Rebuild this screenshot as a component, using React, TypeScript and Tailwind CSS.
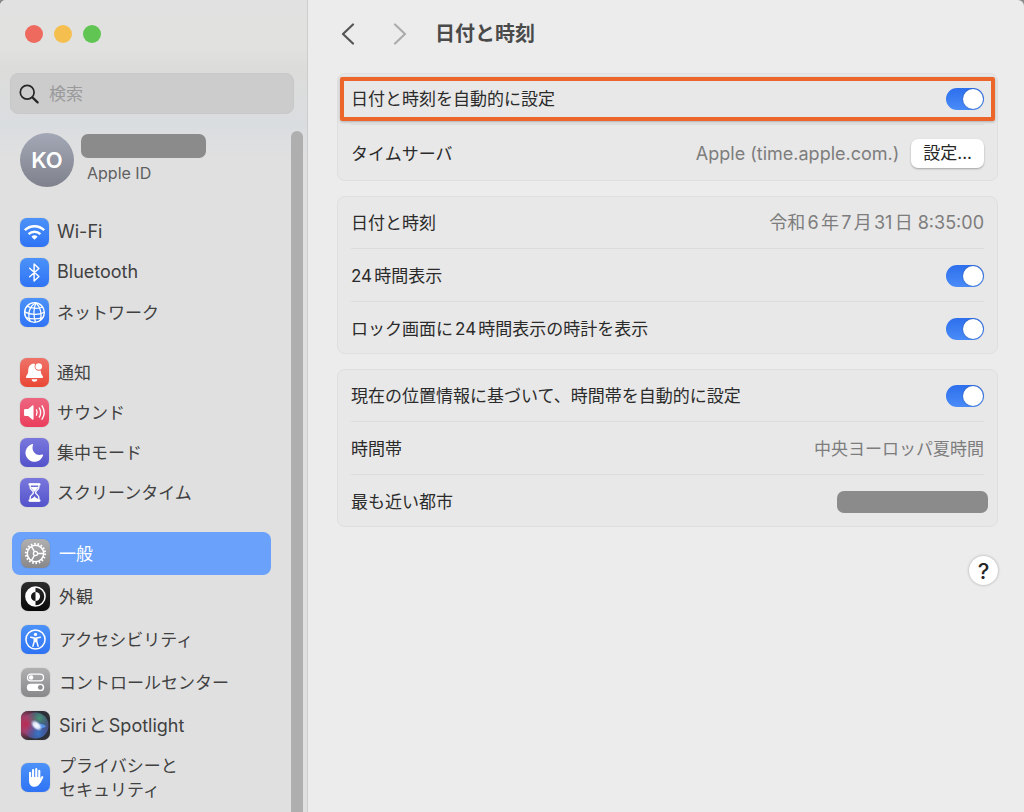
import type { ReactNode } from "react";

const Svg = ({ children, box = "0 0 30 30" }: { children: ReactNode; box?: string }) => (
  <svg viewBox={box} className="size-full" fill="none" aria-hidden="true">
    {children}
  </svg>
);

const WifiIcon = () => (
  <Svg>
    <g stroke="#fff" strokeWidth="2.5">
      <path d="M5 12.6a14.3 14.3 0 0 1 20 0" />
      <path d="M8.9 16.6a8.8 8.8 0 0 1 12.2 0" />
    </g>
    <path d="M15 22.6l-3.2-3.2a4.6 4.6 0 0 1 6.4 0z" fill="#fff" />
  </Svg>
);

const BluetoothIcon = () => (
  <Svg>
    <path d="M10 10.6l9.6 8.6-5 4.6V6.2l5 4.6L10 19.4" stroke="#fff" strokeWidth="1.5" strokeLinejoin="round" strokeLinecap="round" />
  </Svg>
);

const GlobeIcon = () => (
  <Svg>
    <g stroke="#fff" strokeWidth="1.3">
      <circle cx="15" cy="15" r="10.2" strokeWidth="1.5" />
      <path d="M16.6 4.9C9.6 8.4 7.6 16.5 10.4 24M16.6 4.9c-2.8 6-2.6 13.6-.6 20.2M16.6 4.9c4.8 4.6 6.2 12 4.4 18.300" />
      <path d="M7.3 8.400c4.500 2.600 11.500 2.900 16.300.9M4.900 14.400c6 3.400 15 3.500 20.200.3M6.300 20.400c5.200 1.600 12 1.600 17.200-.1" />
    </g>
  </Svg>
);

const BellIcon = () => (
  <Svg>
    <path d="M14.600 5.600c-4.300.3-6 3.400-6.100 7.600-.1 3.600-1.700 4.500-2.200 6-.3.900.1 1.600 1 1.600h15.400c.9 0 1.300-.7 1-1.600-.5-1.500-2.100-2.400-2.200-6z" fill="#fff" />
    <path d="M12 22h6c-.4 1.800-1.500 2.600-3 2.600S12.400 23.800 12 22z" fill="#fff" />
    <circle cx="19.400" cy="8.800" r="4.300" fill="#ec6456" />
    <circle cx="19.400" cy="8.800" r="3.400" fill="#fff" />
  </Svg>
);

const SoundIcon = () => (
  <Svg>
    <path d="M4.200 12.600c0-.8.5-1.300 1.300-1.300h2.900l4.300-3.600c.7-.6 1.300-.3 1.300.6v13.400c0 .9-.6 1.200-1.300.6l-4.300-3.600H5.500c-.8 0-1.300-.5-1.300-1.300z" fill="#fff" />
    <g stroke="#fff" strokeWidth="1.400" strokeLinecap="round">
      <path d="M17 12.300q1.700 2.700 0 5.400M19.900 10.300q3 4.700 0 9.400M22.800 8.100q4.400 6.900 0 13.800" />
    </g>
  </Svg>
);

const MoonIcon = () => (
  <Svg>
    <path d="M12.600 6.300c.6-.3 1.100.1.900.7-2.300 6.300 3 12.300 9.600 10 .7-.2 1.100.3.8.9a9.300 9.300 0 1 1-11.300-11.600z" fill="#fff" />
  </Svg>
);

const HourglassIcon = () => (
  <Svg>
    <path d="M9.800 6.600h10.400M9.800 23.400h10.400" stroke="#fff" strokeWidth="2.200" strokeLinecap="round" />
    <path d="M10.500 6.500v3.300c0 2.300 3.400 3.500 3.400 5.200s-3.400 2.900-3.400 5.200v3.300h9v-3.300c0-2.300-3.400-3.500-3.400-5.200s3.400-2.900 3.400-5.200V6.500z" stroke="#fff" strokeWidth="1.400" />
    <path d="M11.300 9.300h7.400c0 2-2.400 2.900-3 4.600h-1.400c-.6-1.700-3-2.600-3-4.600zM11 23v-1.200c1.400-.9 3-1.300 4-3 1 1.700 2.600 2.100 4 3V23z" fill="#fff" />
  </Svg>
);

const GearIcon = () => (
  <Svg>
    <g stroke="#fff">
      <circle cx="15" cy="15" r="10" strokeWidth="2" strokeDasharray="1.700 1.790" />
      <circle cx="15" cy="15" r="8.500" strokeWidth="1.600" />
      <circle cx="15" cy="15" r="2.200" strokeWidth="1.300" />
      <path d="M17.200 15h6.200M13.900 13.100l-3.100-5.400M13.900 16.900l-3.100 5.400" strokeWidth="1.400" />
    </g>
  </Svg>
);

const AppearanceIcon = () => (
  <Svg>
    <circle cx="15" cy="15" r="9.900" stroke="#fff" strokeWidth="1.600" />
    <path d="M15 5.100a9.900 9.900 0 0 0 0 19.800v-5.200a4.700 4.700 0 0 1 0-9.400z" fill="#fff" />
    <path d="M15 10.300a4.700 4.700 0 0 1 0 9.400z" fill="#fff" />
  </Svg>
);

const AccessibilityIcon = () => (
  <Svg>
    <circle cx="15" cy="15" r="9.900" stroke="#fff" strokeWidth="1.600" />
    <circle cx="15" cy="9.700" r="1.700" fill="#fff" />
    <path d="M10 12.700l3.700.8v3.600L12.300 22M20 12.700l-3.700.8v3.600l1.400 4.900" stroke="#fff" strokeWidth="1.500" strokeLinecap="round" strokeLinejoin="round" />
    <path d="M13.500 12.900h3v5h-3z" fill="#fff" />
  </Svg>
);

const ControlIcon = () => (
  <Svg>
    <rect x="6.700" y="6.400" width="16.600" height="7" rx="3.500" stroke="#fff" strokeWidth="1.300" />
    <circle cx="10.500" cy="9.900" r="2.300" fill="#fff" />
    <rect x="6" y="16.300" width="18" height="7.600" rx="3.800" fill="#fff" />
    <circle cx="20" cy="20.100" r="2.500" fill="#8e8e91" />
  </Svg>
);

const SiriIcon = () => (
  <Svg>
    <defs>
      <radialGradient id="siriRed" cx="15%" cy="45%" r="55%">
        <stop offset="0" stopColor="#b92a52" />
        <stop offset="0.500" stopColor="#b0406e" stopOpacity="0.850" />
        <stop offset="1" stopColor="#b62c53" stopOpacity="0" />
      </radialGradient>
      <radialGradient id="siriGreen" cx="65%" cy="22%" r="48%">
        <stop offset="0" stopColor="#459579" />
        <stop offset="1" stopColor="#3a6b62" stopOpacity="0" />
      </radialGradient>
      <radialGradient id="siriBlue" cx="60%" cy="80%" r="50%">
        <stop offset="0" stopColor="#3976c8" />
        <stop offset="1" stopColor="#315cb0" stopOpacity="0" />
      </radialGradient>
      <radialGradient id="siriGlow" cx="50%" cy="50%" r="50%">
        <stop offset="0" stopColor="#fff" />
        <stop offset="0.500" stopColor="#e8efff" stopOpacity="0.900" />
        <stop offset="1" stopColor="#9fb8f5" stopOpacity="0" />
      </radialGradient>
    </defs>
    <circle cx="15" cy="15" r="13.500" fill="#4d4f80" />
    <rect width="30" height="30" fill="url(#siriRed)" />
    <circle cx="15" cy="15" r="13.500" fill="url(#siriGreen)" />
    <circle cx="15" cy="15" r="13.500" fill="url(#siriBlue)" />
    <path d="M14 16c3-4 9-3.500 12 0-4 2.600-9 2.400-12 0z" fill="#5e9bf2" opacity="0.850" />
    <ellipse cx="16" cy="15" rx="7.500" ry="4.600" transform="rotate(42 16 15)" fill="url(#siriGlow)" />
  </Svg>
);

const HandIcon = () => (
  <Svg>
    <g stroke="#fff" strokeLinecap="round">
      <path d="M9.400 10.200v6M12.500 7.200v9M15.800 6.400v9.400M18.900 8.200v8" strokeWidth="2.200" />
      <path d="M22 14.700l-2.600 5" strokeWidth="2.200" />
    </g>
    <path d="M8.300 14.500h11.700l.6 4.500c-1.200 3.700-3.200 5.600-6.200 5.600-4 0-6.100-2.600-6.100-6.600z" fill="#fff" />
  </Svg>
);

type Item = { label: ReactNode; icon: ReactNode; tile: string; selected?: boolean; tall?: boolean; latin?: boolean };

const blue = "bg-linear-to-b from-[#4c92f8] to-[#2f73f5]";
const purple = "bg-linear-to-b from-[#7a78dd] to-[#5452cb]";
const grey = "bg-linear-to-b from-[#b0b0b1] to-[#88888b]";

const network: Item[] = [
  { label: "Wi-Fi", icon: <WifiIcon />, tile: blue, latin: true },
  { label: "Bluetooth", icon: <BluetoothIcon />, tile: blue, latin: true },
  { label: "ネットワーク", icon: <GlobeIcon />, tile: blue },
];

const alerts: Item[] = [
  { label: "通知", icon: <BellIcon />, tile: "bg-linear-to-b from-[#ee7268] to-[#ea4633]" },
  { label: "サウンド", icon: <SoundIcon />, tile: "bg-linear-to-b from-[#ed6580] to-[#ea3d5c]" },
  { label: "集中モード", icon: <MoonIcon />, tile: purple },
  { label: "スクリーンタイム", icon: <HourglassIcon />, tile: purple },
];

const system: Item[] = [
  { label: "一般", icon: <GearIcon />, tile: grey, selected: true },
  { label: "外観", icon: <AppearanceIcon />, tile: "bg-linear-to-b from-[#2c2e2c] to-[#090909]" },
  { label: "アクセシビリティ", icon: <AccessibilityIcon />, tile: blue },
  { label: "コントロールセンター", icon: <ControlIcon />, tile: grey },
  { label: "SiriとSpotlight", icon: <SiriIcon />, tile: "bg-[#2e3038]", latin: true },
  {
    label: (
      <>
        プライバシーと
        <br />
        セキュリティ
      </>
    ),
    icon: <HandIcon />,
    tile: blue,
    tall: true,
  },
];

const Tile = ({ item }: { item: Item }) => (
  <span className={`size-[29px] shrink-0 overflow-hidden rounded-[7px] shadow-[0_0_1px_rgba(0,0,0,0.35)] ${item.tile}`}>
    {item.icon}
  </span>
);

const Group = ({ items }: { items: Item[] }) => (
  <ul className="pl-5">
    {items.map((item, i) => (
      <li key={i}>
        <a href="#" className="flex h-10 items-center gap-2">
          <Tile item={item} />
          <span className={item.latin ? "text-lg leading-6" : "pt-px"}>{item.label}</span>
        </a>
      </li>
    ))}
  </ul>
);

const Toggle = ({ id }: { id: string }) => (
  <input
    id={id}
    type="checkbox"
    role="switch"
    defaultChecked
    className="flex h-[22px] w-[38px] shrink-0 appearance-none items-center rounded-full bg-[#c9c9c9] px-px before:size-5 before:rounded-full before:bg-white before:shadow-[0_0_2px_rgba(0,0,0,0.3)] checked:justify-end checked:bg-linear-to-b checked:from-[#2d6fec] checked:to-[#4a8bf8]"
  />
);

const Card = ({ children, highlight }: { children: ReactNode; highlight?: boolean }) => (
  <section className="relative rounded-lg border border-[#dfdfdf] bg-[#e8e8e8]">
    <div className="divide-y divide-[#dcdcdc]">{children}</div>
    {highlight && (
      <div className="pointer-events-none absolute inset-x-0.5 top-[3px] h-11 rounded-[2px] border-4 border-[#ec662b] shadow-[0_1px_3px_rgba(0,0,0,0.25)]" />
    )}
  </section>
);

const Row = ({ label, id, children, height = "h-[53px]" }: { label: string; id?: string; children: ReactNode; height?: string }) => (
  <div className={`mx-[13px] flex items-center justify-between not-first:pt-0.5 ${height}`}>
    {id ? <label htmlFor={id}>{label}</label> : <span>{label}</span>}
    {children}
  </div>
);

export default function App() {
  return (
    <div className="h-screen bg-[#8a8a8a]">
      <div className="flex h-full overflow-hidden rounded-t-md bg-[#ececec] font-['Inter','Noto_Sans_CJK_JP',sans-serif] text-[17px] leading-6 text-[#2b2b2b] [text-autospace:normal]">
        <aside className="flex w-[308px] shrink-0 flex-col overflow-hidden border-r border-[#cdcdcd] bg-[#e0e0e0] bg-[linear-gradient(to_bottom,#e1e1e1_0px,#e1e1df_48px,#dcdcda_68px,#dadde0_125px,#e0e0e0_160px)] text-[#414141]">
          <div className="flex gap-[11px] pt-[25px] pl-[25px]">
            <button aria-label="閉じる" className="size-[18px] rounded-full bg-[#ee6a5f]" />
            <button aria-label="しまう" className="size-[18px] rounded-full bg-[#f5bf4f]" />
            <button aria-label="拡大" className="size-[18px] rounded-full bg-[#61c554]" />
          </div>
          <label className="mt-[30px] mr-[13px] ml-2.5 flex h-[41px] shrink-0 items-center gap-2.5 rounded-lg border border-[#c8c8c8] bg-[#cbcccb] pl-2">
            <svg viewBox="0 0 20 20" className="size-5 shrink-0" fill="none" stroke="#262626" strokeLinecap="round" aria-hidden="true">
              <circle cx="8.200" cy="8.200" r="6.900" strokeWidth="1.700" />
              <path d="M13.400 13.400l5.200 5" strokeWidth="2.200" />
            </svg>
            <input type="search" aria-label="検索" placeholder="検索" className="w-full min-w-0 bg-transparent outline-none placeholder:text-[#9a9a9c]" />
          </label>

          <div className="mt-[17px] flex min-h-0 flex-1 justify-between overflow-hidden">
            <nav className="min-w-0 flex-1">
              <a href="#" className="mt-0.5 flex h-[54px] gap-[7px] pl-5">
                <span className="flex size-[54px] items-center justify-center rounded-full bg-linear-to-b from-[#a4a8b6] to-[#7f828c] text-[22px] font-semibold text-white">
                  KO
                </span>
                <span className="flex flex-col gap-[3px] pt-px">
                  <span className="h-6 w-[125px] rounded-[7px] bg-[#8b8b8b]" />
                  <span className="pl-1.5 text-base text-[#5f5f5f]">Apple ID</span>
                </span>
              </a>
              <div className="mt-[25px] flex flex-col gap-5">
                <Group items={network} />
                <Group items={alerts} />
                <ul className="pr-5 pl-3">
                  {system.map((item, i) => (
                    <li key={i}>
                      <a
                        href="#"
                        className={`flex items-center gap-[9px] rounded-lg pl-[9px] ${item.tall ? "h-[61px]" : "h-[43px]"} ${
                          item.selected ? "bg-[#6aa1fa] text-white" : ""
                        }`}
                      >
                        <Tile item={item} />
                        <span className={item.latin ? "text-lg leading-6" : ""}>{item.label}</span>
                      </a>
                    </li>
                  ))}
                </ul>
              </div>
            </nav>
            <div className="mr-1 w-3 shrink-0 rounded-t-full bg-[#afafaf]" />
          </div>
        </aside>

        <main className="min-w-0 flex-1 pr-[26px] pl-[29px]">
          <header className="flex h-[73px] items-center pb-1.5">
            <button aria-label="戻る" className="pl-1">
              <svg viewBox="0 0 14 22" className="h-[22px] w-3.5" fill="none" stroke="#555" strokeWidth="2.200" strokeLinecap="round" strokeLinejoin="round">
                <path d="M12 1.500L2 11l10 9.500" />
              </svg>
            </button>
            <button aria-label="進む" className="pl-[38px]" disabled>
              <svg viewBox="0 0 14 22" className="h-[22px] w-3.5" fill="none" stroke="#acacac" strokeWidth="2.200" strokeLinecap="round" strokeLinejoin="round">
                <path d="M2 1.500L12 11 2 20.500" />
              </svg>
            </button>
            <h1 className="pl-7 text-xl font-semibold text-[#4a4a4a]">日付と時刻</h1>
          </header>

          <div className="flex flex-col gap-[15px]">
            <Card highlight>
              <Row label="日付と時刻を自動的に設定" id="auto-time" height="h-[51px]">
                <Toggle id="auto-time" />
              </Row>
              <Row label="タイムサーバ" height="h-[55px]">
                <span className="flex items-center gap-3 text-lg text-[#7d7d7d]">
                  Apple (time.apple.com.)
                  <button className="h-[29px] rounded-[7px] bg-white px-3 text-[17px] text-[#262626] shadow-[0_1px_2px_rgba(0,0,0,0.3)]">設定...</button>
                </span>
              </Row>
            </Card>

            <Card>
              <Row label="日付と時刻" height="h-[52px]">
                <span className="text-lg text-[#7d7d7d]">令和6年7月31日 8:35:00</span>
              </Row>
              <Row label="24時間表示" id="clock-24">
                <Toggle id="clock-24" />
              </Row>
              <Row label="ロック画面に24時間表示の時計を表示" id="lock-24" height="h-[51px]">
                <Toggle id="lock-24" />
              </Row>
            </Card>

            <Card>
              <Row label="現在の位置情報に基づいて、時間帯を自動的に設定" id="auto-zone" height="h-[52px]">
                <Toggle id="auto-zone" />
              </Row>
              <Row label="時間帯">
                <span className="text-[#7d7d7d]">中央ヨーロッパ夏時間</span>
              </Row>
              <Row label="最も近い都市" height="h-[51px]">
                <span className="-mr-1 h-[22px] w-[151px] rounded-[7px] bg-[#8b8b8b]" />
              </Row>
            </Card>
          </div>

          <div className="mt-[29px] flex justify-end">
            <button aria-label="ヘルプ" className="size-[29px] rounded-full bg-white text-[22px] font-medium text-[#262626] shadow-[0_0_3px_rgba(0,0,0,0.3)]">
              ?
            </button>
          </div>
        </main>
      </div>
    </div>
  );
}
